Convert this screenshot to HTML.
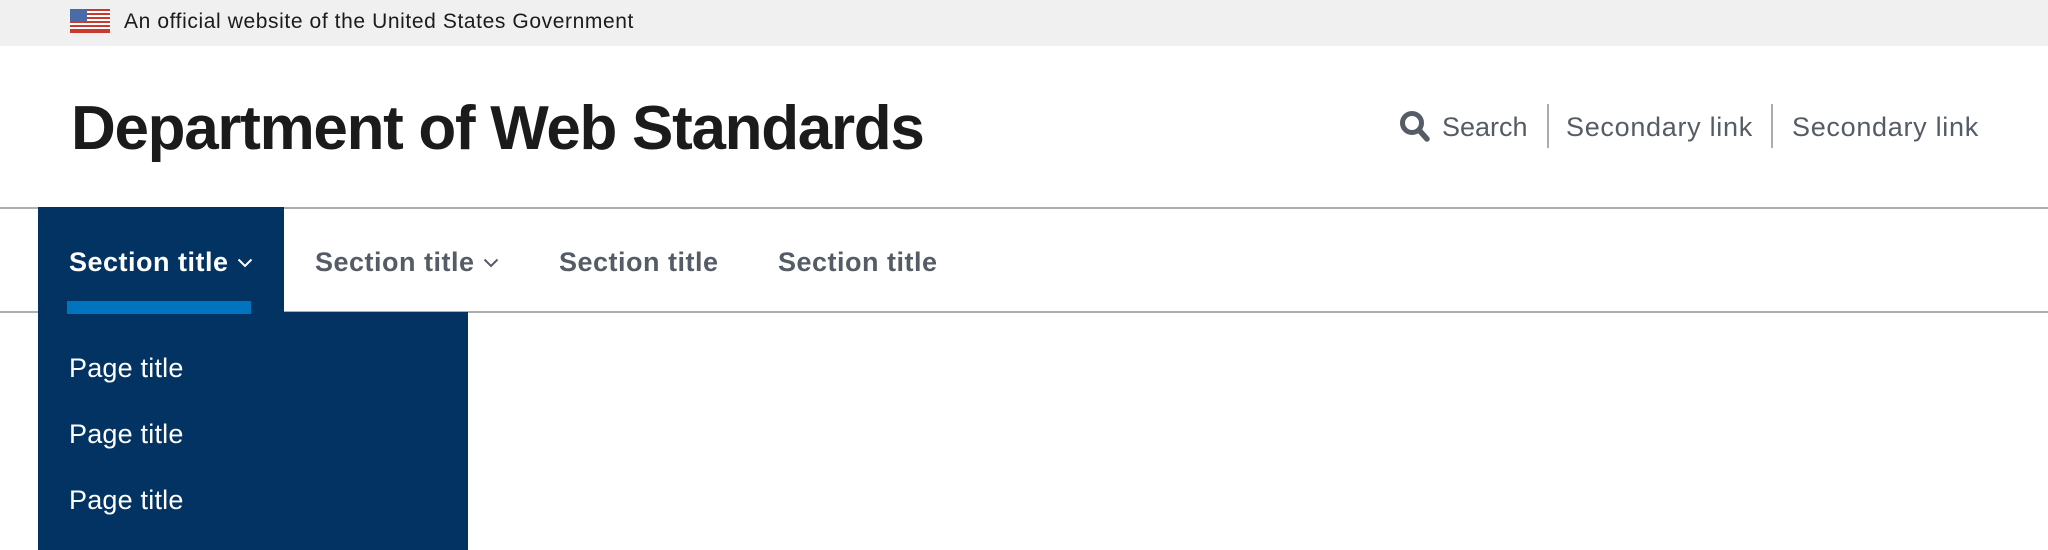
<!DOCTYPE html>
<html><head><meta charset="utf-8"><style>
*{margin:0;padding:0;box-sizing:border-box}
body{width:2048px;height:550px;overflow:hidden;background:#fff;font-family:"Liberation Sans",sans-serif;position:relative}
.a{position:absolute;white-space:nowrap}
.banner{left:0;top:0;width:2048px;height:46px;background:#f0f0f0}
.nav{font-weight:bold;font-size:27px;letter-spacing:0.5px;color:#565c65;top:247px}
.rl{font-size:27px;color:#565c65;top:112px;letter-spacing:0.7px}
.pt{font-size:27px;color:#fff;left:69px;letter-spacing:0.2px}
</style></head><body>
<div class="a banner"></div>
<svg class="a" style="left:70px;top:9px" width="40" height="24" viewBox="0 0 40 24">
<rect width="40" height="24" fill="#fff"/>
<g fill="#c8392e"><rect y="0" width="40" height="2"/><rect y="4" width="40" height="2"/><rect y="8" width="40" height="2"/><rect y="12" width="40" height="2"/><rect y="16" width="40" height="2"/><rect y="20" width="40" height="2"/><rect y="22" width="40" height="2"/></g>
<rect width="17" height="13" fill="#4b6aa8"/></svg>
<div class="a" style="left:124px;top:10px;font-size:21px;color:#1b1b1b;letter-spacing:0.6px">An official website of the United States Government</div>
<div class="a" style="left:71px;top:93px;font-size:62px;font-weight:bold;color:#1b1b1b;letter-spacing:-1.3px">Department of Web Standards</div>
<svg class="a" style="left:1399px;top:110px" width="32" height="34" viewBox="0 0 32 34"><circle cx="13" cy="13" r="9.5" fill="none" stroke="#565c65" stroke-width="5"/><line x1="20" y1="20" x2="28" y2="29" stroke="#565c65" stroke-width="5.5" stroke-linecap="round"/></svg>
<div class="a rl" style="left:1442px;letter-spacing:0">Search</div>
<div class="a" style="left:1547px;top:104px;width:2px;height:44px;background:#a9aeb1"></div>
<div class="a rl" style="left:1566px">Secondary link</div>
<div class="a" style="left:1771px;top:104px;width:2px;height:44px;background:#a9aeb1"></div>
<div class="a rl" style="left:1792px">Secondary link</div>
<div class="a" style="left:0;top:207px;width:2048px;height:2px;background:#a9aeb1"></div>
<div class="a" style="left:0;top:311px;width:2048px;height:2px;background:#a9aeb1"></div>
<div class="a" style="left:38px;top:207px;width:246px;height:106px;background:#023363"></div>
<div class="a" style="left:38px;top:312px;width:430px;height:238px;background:#023363"></div>
<div class="a" style="left:67px;top:301px;width:184px;height:13px;background:#0074bf"></div>
<div class="a nav" style="left:69px;color:#fff">Section title</div>
<svg class="a" style="left:237px;top:258px" width="16" height="10" viewBox="0 0 16 10"><path d="M1.5 1.5 L8 8 L14.5 1.5" fill="none" stroke="#fff" stroke-width="2"/></svg>
<div class="a nav" style="left:315px">Section title</div>
<svg class="a" style="left:483px;top:258px" width="16" height="10" viewBox="0 0 16 10"><path d="M1.5 1.5 L8 8 L14.5 1.5" fill="none" stroke="#565c65" stroke-width="2"/></svg>
<div class="a nav" style="left:559px">Section title</div>
<div class="a nav" style="left:778px">Section title</div>
<div class="a pt" style="top:353px">Page title</div>
<div class="a pt" style="top:419px">Page title</div>
<div class="a pt" style="top:485px">Page title</div>
</body></html>
